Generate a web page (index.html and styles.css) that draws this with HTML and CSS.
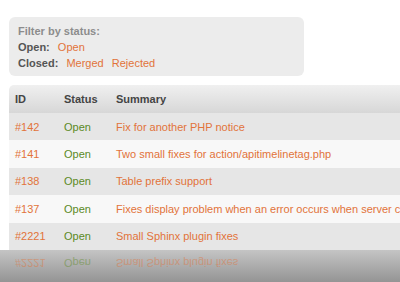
FILE: index.html
```html
<!DOCTYPE html>
<html lang="en">
<head>
  <meta charset="UTF-8">
  <title>Issues</title>
  <link rel="stylesheet" href="styles.css">
</head>
<body>

  <div class="filter">
    <div class="filter-title">Filter by status:</div>
    <div class="filter-line"><strong>Open:</strong> <a href="#">Open</a></div>
    <div class="filter-line"><strong>Closed:</strong> <a href="#">Merged</a> <a href="#">Rejected</a></div>
  </div>

  <table class="issues">
    <colgroup>
      <col class="col-id">
      <col class="col-status">
      <col>
    </colgroup>
    <thead>
      <tr>
        <th>ID</th>
        <th>Status</th>
        <th>Summary</th>
      </tr>
    </thead>
    <tbody>
      <tr><td><a href="#">#142</a></td><td class="open">Open</td><td><a href="#">Fix for another PHP notice</a></td></tr>
      <tr><td><a href="#">#141</a></td><td class="open">Open</td><td><a href="#">Two small fixes for action/apitimelinetag.php</a></td></tr>
      <tr><td><a href="#">#138</a></td><td class="open">Open</td><td><a href="#">Table prefix support</a></td></tr>
      <tr><td><a href="#">#137</a></td><td class="open">Open</td><td><a href="#">Fixes display problem when an error occurs when server can't be reached</a></td></tr>
      <tr><td><a href="#">#2221</a></td><td class="open">Open</td><td><a href="#">Small Sphinx plugin fixes</a></td></tr>
    </tbody>
  </table>

  <div class="reflection">
    <div class="reflect-row">
      <span class="col-id"><a href="#">#2221</a></span>
      <span class="col-status open">Open</span>
      <span><a href="#">Small Sphinx plugin fixes</a></span>
    </div>
  </div>

</body>
</html>
```

FILE: styles.css
```css
* {
  box-sizing: border-box;
}

body {
  font-family: 'Liberation Sans', Arial, sans-serif;
  font-size: 11px;
  margin: 0;
  padding: 0;
  background: #ffffff;
  overflow: hidden;
  width: 400px;
  height: 282px;
}

a {
  color: #e2733a;
  text-decoration: none;
}

.filter {
  margin: 17px 0 0 9px;
  width: 295px;
  height: 59px;
  padding: 6px 9px;
  background: #ececec;
  border-radius: 6px;
  line-height: 16px;
}

.filter-title {
  color: #8c8c8c;
  font-weight: bold;
}

.filter-line {
  color: #555;
}

.filter-line strong {
  margin-right: 5px;
}

.filter-line a {
  margin-right: 5px;
}

.issues {
  margin: 9px 0 0 9px;
  width: 460px;
  table-layout: fixed;
  border-collapse: collapse;
  white-space: nowrap;
}

.issues th,
.issues td {
  padding: 0 6px;
  text-align: left;
  overflow: hidden;
}

.issues th {
  height: 28px;
  color: #444;
  font-weight: bold;
  background: linear-gradient(#f0f0f0, #d7d7d7);
}

.issues th:first-child {
  border-top-left-radius: 5px;
}

.issues td {
  height: 27.4px;
}

.issues tbody tr:nth-child(odd) {
  background: #e6e6e6;
}

.issues tbody tr:nth-child(even) {
  background: #f8f8f8;
}

.col-id {
  width: 49px;
}

.col-status {
  width: 52px;
}

.open {
  color: #5c8a1f;
}

.reflection {
  height: 40px;
  background: linear-gradient(#c4c4c4, #888888);
  padding-left: 9px;
}

.reflect-row {
  display: flex;
  align-items: center;
  height: 27px;
  white-space: nowrap;
  transform: scaleY(-1);
  opacity: 0.45;
}

.reflect-row span {
  padding: 0 6px;
  flex: none;
}
```
